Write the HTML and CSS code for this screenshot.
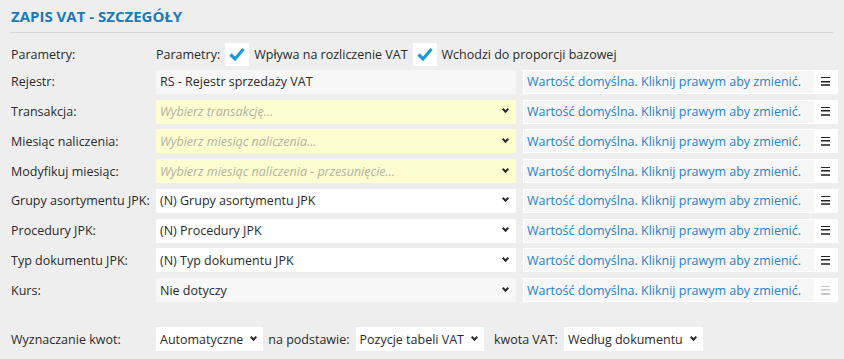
FILE: index.html
```html
<!DOCTYPE html>
<html lang="pl">
<head>
    <meta charset="UTF-8">
    <meta name="viewport" content="width=device-width, initial-scale=1.0">
    <title>Zapis VAT - szczegóły</title>
    <link rel="stylesheet" href="styles.css">
</head>
<body>
    <div class="panel">
        <h1 class="title">Zapis VAT - szczegóły</h1>

        <div class="form">
            <div class="row params-row">
                <div class="label">Parametry:</div>
                <div class="params">
                    <span>Parametry:</span>
                    <span class="check">
                        <svg viewBox="0 0 24 23" width="24" height="23"><path d="M5.5 11.5 L10 16 L18.5 6" fill="none" stroke="#1c9ad8" stroke-width="3.2"/></svg>
                    </span>
                    <span>Wpływa na rozliczenie VAT</span>
                    <span class="check">
                        <svg viewBox="0 0 24 23" width="24" height="23"><path d="M5.5 11.5 L10 16 L18.5 6" fill="none" stroke="#1c9ad8" stroke-width="3.2"/></svg>
                    </span>
                    <span>Wchodzi do proporcji bazowej</span>
                </div>
            </div>

            <div class="row">
                <div class="label">Rejestr:</div>
                <div class="field readonly">RS - Rejestr sprzedaży VAT</div>
                <div class="default"><span class="hint">Wartość domyślna. Kliknij prawym aby zmienić.</span><span class="menu"><i></i></span></div>
            </div>

            <div class="row">
                <div class="label">Transakcja:</div>
                <div class="field required"><span class="placeholder">Wybierz transakcję...</span><span class="chev"></span></div>
                <div class="default"><span class="hint">Wartość domyślna. Kliknij prawym aby zmienić.</span><span class="menu"><i></i></span></div>
            </div>

            <div class="row">
                <div class="label">Miesiąc naliczenia:</div>
                <div class="field required"><span class="placeholder">Wybierz miesiąc naliczenia...</span><span class="chev"></span></div>
                <div class="default"><span class="hint">Wartość domyślna. Kliknij prawym aby zmienić.</span><span class="menu"><i></i></span></div>
            </div>

            <div class="row">
                <div class="label">Modyfikuj miesiąc:</div>
                <div class="field required"><span class="placeholder">Wybierz miesiąc naliczenia - przesunięcie...</span><span class="chev"></span></div>
                <div class="default"><span class="hint">Wartość domyślna. Kliknij prawym aby zmienić.</span><span class="menu"><i></i></span></div>
            </div>

            <div class="row">
                <div class="label">Grupy asortymentu JPK:</div>
                <div class="field"><span>(N) Grupy asortymentu JPK</span><span class="chev"></span></div>
                <div class="default"><span class="hint">Wartość domyślna. Kliknij prawym aby zmienić.</span><span class="menu"><i></i></span></div>
            </div>

            <div class="row">
                <div class="label">Procedury JPK:</div>
                <div class="field"><span>(N) Procedury JPK</span><span class="chev"></span></div>
                <div class="default"><span class="hint">Wartość domyślna. Kliknij prawym aby zmienić.</span><span class="menu"><i></i></span></div>
            </div>

            <div class="row">
                <div class="label">Typ dokumentu JPK:</div>
                <div class="field"><span>(N) Typ dokumentu JPK</span><span class="chev"></span></div>
                <div class="default"><span class="hint">Wartość domyślna. Kliknij prawym aby zmienić.</span><span class="menu"><i></i></span></div>
            </div>

            <div class="row">
                <div class="label">Kurs:</div>
                <div class="field readonly"><span>Nie dotyczy</span><span class="chev"></span></div>
                <div class="default disabled"><span class="hint">Wartość domyślna. Kliknij prawym aby zmienić.</span><span class="menu"><i></i></span></div>
            </div>
        </div>

        <div class="amounts">
            <div class="label">Wyznaczanie kwot:</div>
            <div class="pick">Automatyczne <span class="chev"></span></div>
            <span class="inline-label">na podstawie:</span>
            <div class="pick">Pozycje tabeli VAT <span class="chev"></span></div>
            <span class="inline-label wide">kwota VAT:</span>
            <div class="pick">Według dokumentu <span class="chev"></span></div>
        </div>
    </div>
</body>
</html>
```

FILE: styles.css
```css
/* Basic Reset */
* {
    margin: 0;
    padding: 0;
    box-sizing: border-box;
}

body {
    font-family: 'Open Sans', 'Noto Sans', sans-serif;
    font-size: 12.5px;
    background: #eeeeee;
    color: #2b2b2b;
}

.panel {
    padding: 6px 3px 0 11px;
}

.title {
    font-size: 15px;
    font-weight: bold;
    text-transform: uppercase;
    color: #1b7ab7;
    height: 27px;
    line-height: 20px;
    border-bottom: 1px solid #d6d6d6;
    margin-right: 8px;
}

.form {
    margin-top: 9px;
    display: flex;
    flex-direction: column;
    gap: 5.75px;
}

.row {
    display: grid;
    grid-template-columns: 141px 360px 318px;
    column-gap: 4px;
    height: 24px;
    align-items: center;
}

.row > .default {
    margin-left: 3px;
}

.params-row {
    margin-bottom: -2px;
}

.label {
    white-space: nowrap;
}

.params {
    grid-column: 2 / 4;
    display: flex;
    align-items: center;
    gap: 4px;
}

.check {
    display: inline-flex;
    width: 24px;
    height: 23px;
    background: #ffffff;
    margin: 0 1px 0 1px;
}

.field {
    height: 24px;
    display: flex;
    align-items: center;
    justify-content: space-between;
    padding: 0 8px 0 4px;
    background: #ffffff;
    white-space: nowrap;
}

.field.readonly {
    background: #f7f7f7;
}

.field.required {
    background: #fdfdd0;
}

.placeholder {
    font-style: italic;
    color: #b3b3a2;
}

.chev {
    display: inline-block;
    width: 5px;
    height: 5px;
    border-right: 2px solid #2a2a2a;
    border-bottom: 2px solid #2a2a2a;
    transform: translateY(-2px) rotate(45deg);
}

.default {
    height: 24px;
    display: flex;
    align-items: stretch;
    border: 1px solid #ffffff;
    background: #ffffff;
}

.hint {
    flex: 1;
    display: flex;
    align-items: center;
    padding-left: 3px;
    background: #f6f6f6;
    color: #2682c9;
    white-space: nowrap;
}

.menu {
    width: 23px;
    display: flex;
    align-items: center;
    justify-content: center;
}

/* hamburger: three short bars */
.menu i {
    display: block;
    width: 9px;
    height: 9px;
    border-top: 1.5px solid #222222;
    border-bottom: 2px solid #555555;
    background: linear-gradient(#222222, #222222) center / 100% 1.5px no-repeat;
}

.default.disabled .menu i {
    border-color: #c8c8c8;
    background-image: linear-gradient(#c8c8c8, #c8c8c8);
}

.amounts {
    margin-top: 25px;
    display: flex;
    align-items: center;
    height: 24px;
}

.amounts .label {
    width: 145px;
}

.pick {
    height: 24px;
    display: flex;
    align-items: center;
    gap: 8px;
    padding: 0 7px 0 4px;
    background: #ffffff;
    white-space: nowrap;
}

.inline-label {
    margin: 0 6px 0 5px;
}

.inline-label.wide {
    margin-left: 10px;
}
```
